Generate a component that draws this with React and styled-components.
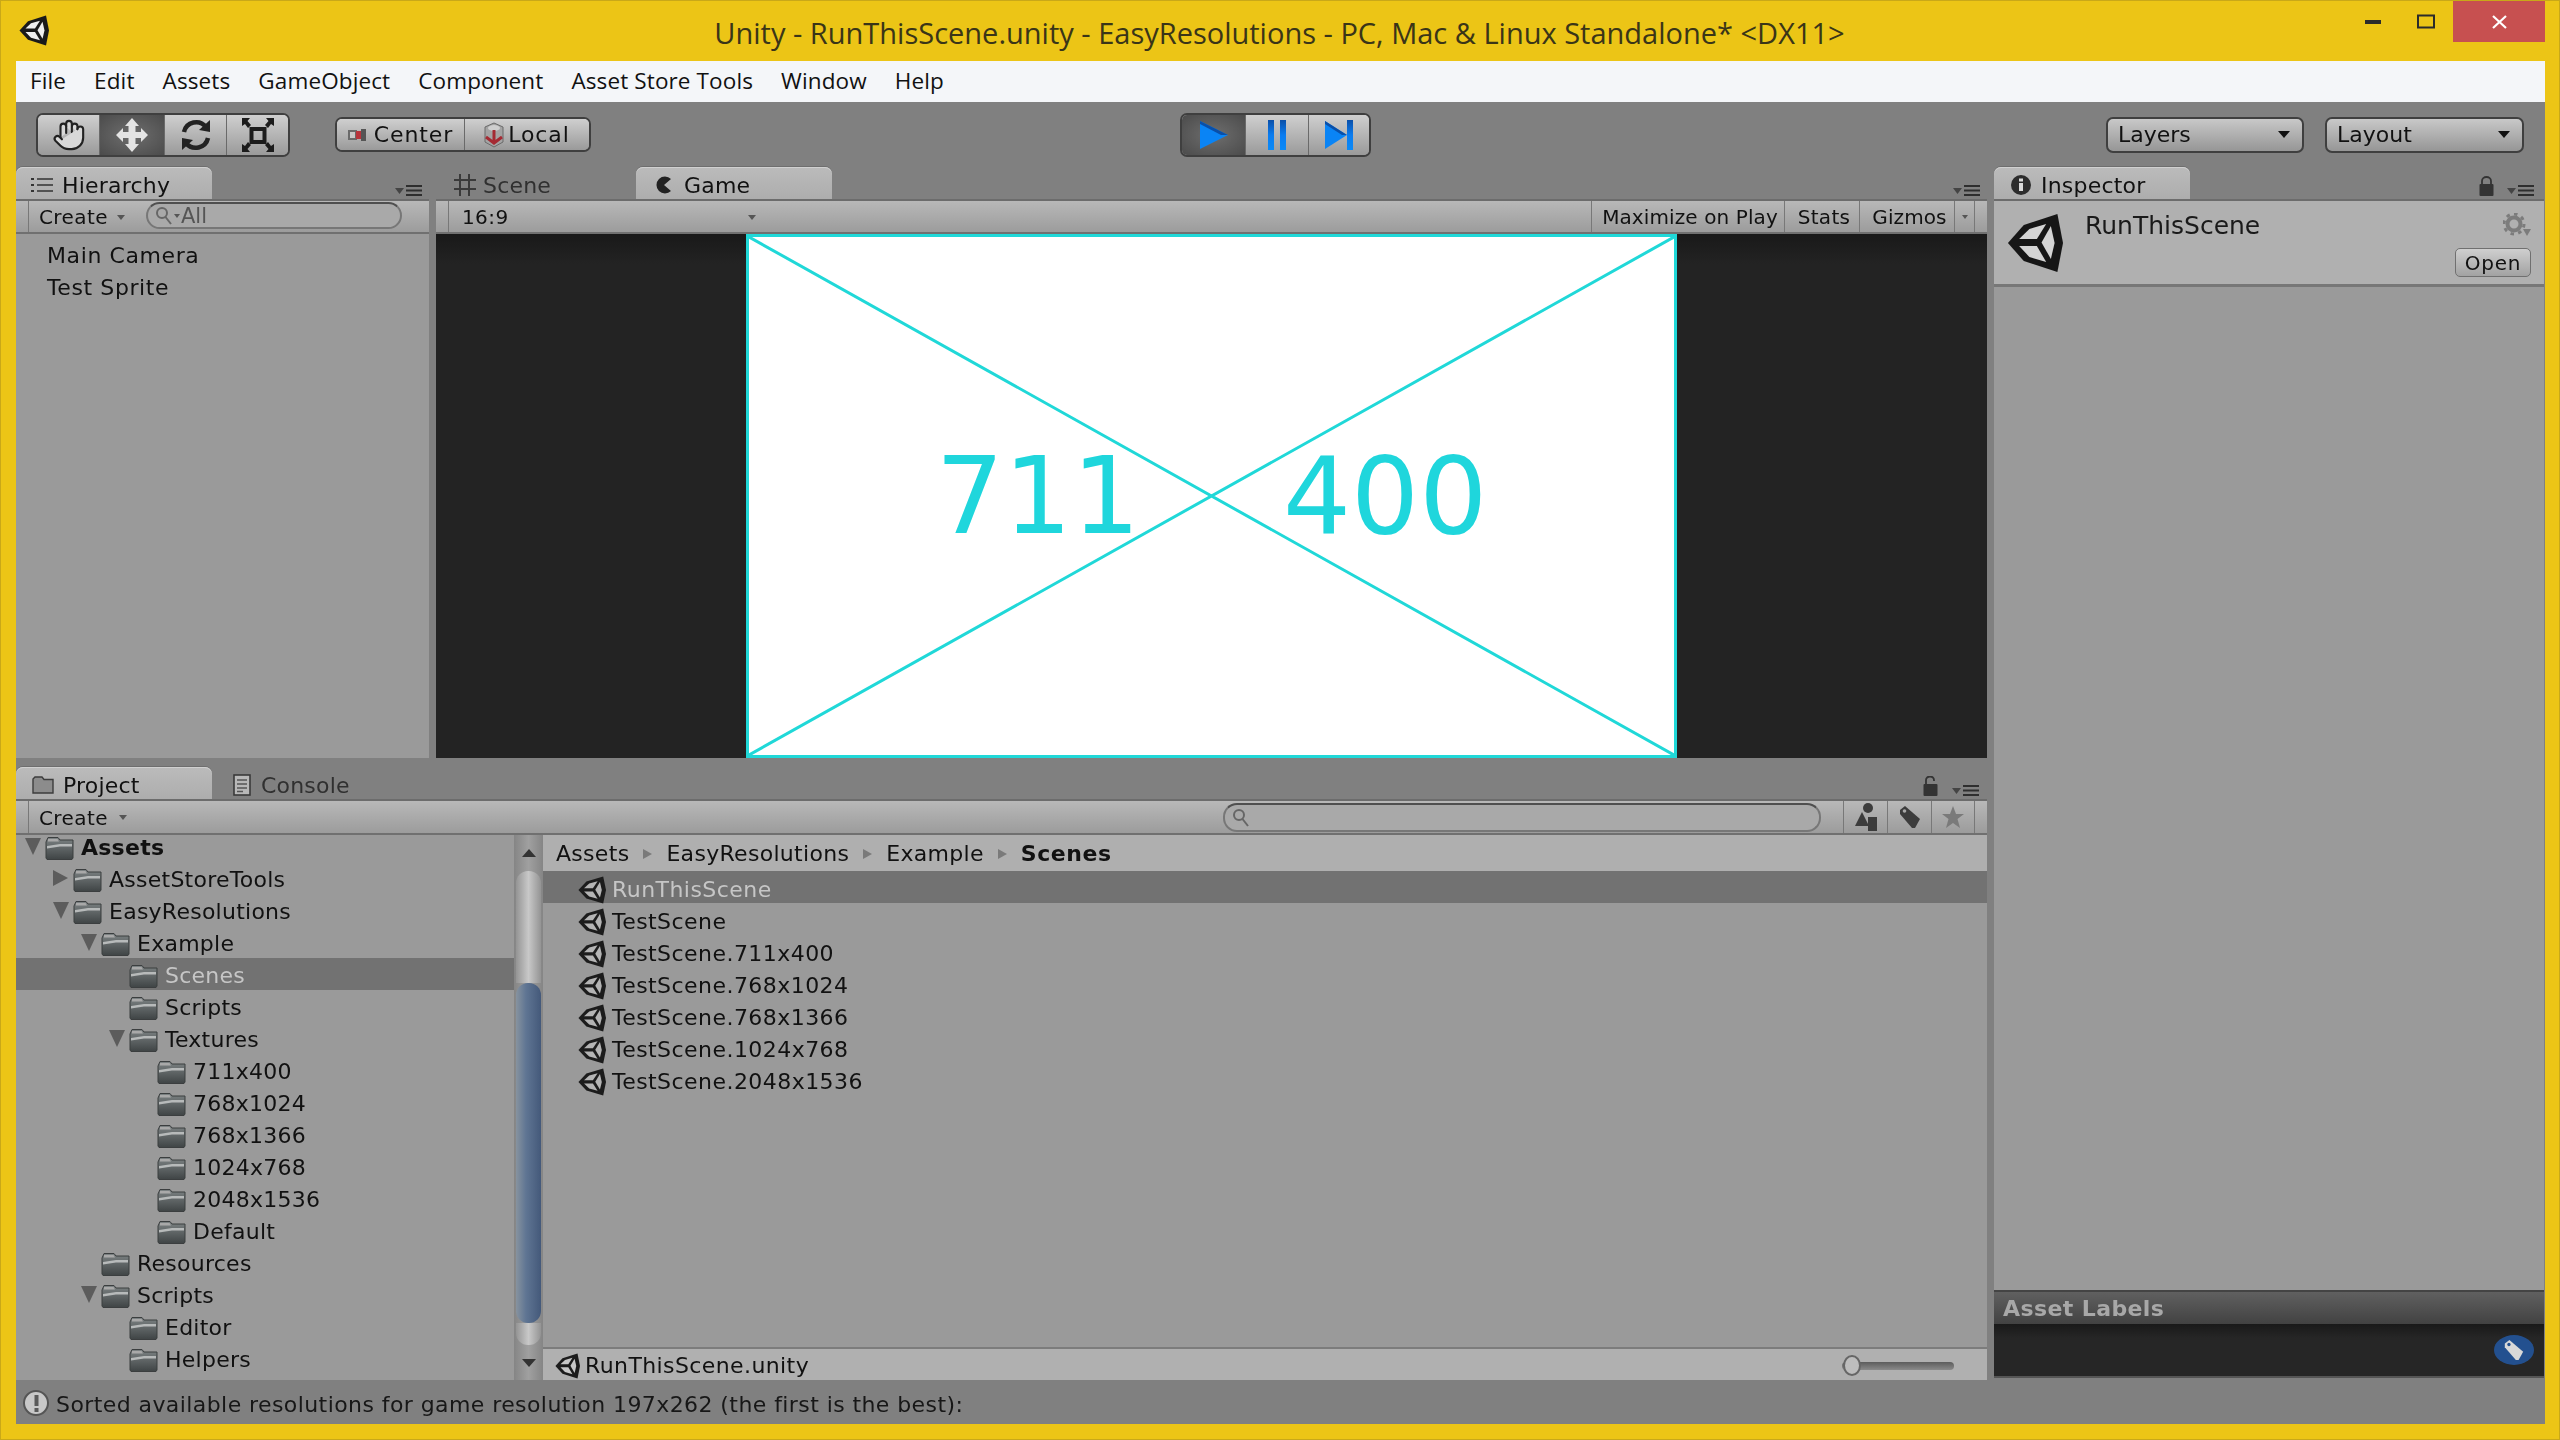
import React from 'react';
import styled, { createGlobalStyle } from 'styled-components';
import { Hand } from 'lucide-react';

const GlobalStyle = createGlobalStyle`
  html, body { margin: 0; padding: 0; background: #ecc516; }
  * { box-sizing: border-box; }
`;

const UI_FONT = '"DejaVu Sans", sans-serif';

const Window = styled.div`
  width: 2560px;
  height: 1440px;
  display: flex;
  flex-direction: column;
  background: #ecc516;
  border: 1px solid #c9a818;
  padding: 0 14px 15px 15px;
  overflow: hidden;
`;

const TitleBar = styled.div`
  height: 60px;
  flex: none;
  display: flex;
  align-items: flex-start;
`;

const LogoSlot = styled.div`
  width: 36px;
  padding: 14px 0 0 3px;
  flex: none;
`;

const TitleText = styled.div`
  flex: 1;
  text-align: center;
  padding: 12px 0 0 172px;
  font: 29px "Open Sans", sans-serif;
  color: #3a3518;
  white-space: nowrap;
`;

const WinControls = styled.div`
  display: flex;
  flex: none;
  align-items: flex-start;
`;

const WinButton = styled.div`
  width: ${p => p.$w}px;
  height: 41px;
  margin-left: ${p => p.$ml || 0}px;
  display: flex;
  align-items: center;
  justify-content: center;
  background: ${p => p.$close ? '#c75050' : 'transparent'};
`;

const MenuBar = styled.div`
  height: 41px;
  flex: none;
  display: flex;
  align-items: center;
  gap: 28px;
  padding: 0 0 2px 14px;
  background: #f4f6f9;
  font: 22.5px "Open Sans", sans-serif;
  letter-spacing: 0.12px;
  color: #111;
`;

const Editor = styled.div`
  flex: 1;
  min-height: 0;
  display: flex;
  flex-direction: column;
  background: #808080;
  filter: blur(0.55px);
  font-family: ${UI_FONT};
`;

const ToolBar = styled.div`
  height: 65px;
  flex: none;
  display: grid;
  grid-template-columns: 1fr auto 1fr;
  align-items: center;
  padding: 0 21px 0 20px;
`;

const ToolSide = styled.div`
  display: flex;
  align-items: center;
  gap: ${p => p.$gap || 0}px;
  justify-content: ${p => p.$end ? 'flex-end' : 'flex-start'};
`;

const BtnGroup = styled.div`
  display: flex;
  height: ${p => p.$h}px;
  margin-right: ${p => p.$mr || 0}px;
  border: 2px solid #3f3f3f;
  border-radius: 7px;
  overflow: hidden;
  background: linear-gradient(#cfcfcf, #9a9a9a);
`;

const ToolBtn = styled.div`
  width: ${p => p.$w}px;
  display: flex;
  align-items: center;
  justify-content: center;
  gap: ${p => p.$gap || 8}px;
  font-size: 22px;
  letter-spacing: 0.9px;
  color: #111;
  background: ${p => p.$on
    ? 'radial-gradient(ellipse at center, #6e6e6e, #4b4b4b)'
    : 'linear-gradient(#cfcfcf, #9a9a9a)'};
  & + & { border-left: 1px solid ${p => p.$dark ? '#2c2c2c' : '#6a6a6a'}; }
`;

const DropButton = styled.div`
  width: ${p => p.$w}px;
  height: 36px;
  display: flex;
  align-items: center;
  justify-content: space-between;
  padding: 0 12px 0 10px;
  border: 2px solid #3f3f3f;
  border-radius: 7px;
  background: linear-gradient(#c8c8c8, #969696);
  font-size: 22px;
  color: #111;
`;

const Caret = styled.span`
  width: 0;
  height: 0;
  flex: none;
  border-left: ${p => p.$s || 5}px solid transparent;
  border-right: ${p => p.$s || 5}px solid transparent;
  border-top: ${p => (p.$s || 5) + 1}px solid ${p => p.$c || '#111'};
  transform: ${p => p.$up ? 'rotate(180deg)' : 'none'};
`;

const Workspace = styled.div`
  flex: 1;
  min-height: 0;
  display: grid;
  grid-template-columns: 1971px 550px;
  grid-template-rows: minmax(0, 1fr) 44px;
  column-gap: 7px;
`;

const LeftStack = styled.div`
  display: flex;
  flex-direction: column;
  min-height: 0;
`;

const UpperRow = styled.div`
  height: 591px;
  flex: none;
  display: grid;
  grid-template-columns: 413px 1551px;
  gap: 7px;
`;

const Pane = styled.div`
  display: flex;
  flex-direction: column;
  min-height: 0;
  min-width: 0;
  margin-top: ${p => p.$top || 0}px;
  flex: ${p => p.$grow ? 1 : 'none'};
`;

const TabStrip = styled.div`
  height: 32px;
  flex: none;
  display: flex;
  align-items: flex-end;
`;

const Tab = styled.div`
  width: ${p => p.$w}px;
  height: 32px;
  display: flex;
  align-items: center;
  gap: ${p => p.$gap || 9}px;
  padding: 4px 0 0 ${p => p.$pad}px;
  border-radius: 7px 7px 0 0;
  font-size: 22px;
  letter-spacing: 0.2px;
  color: ${p => p.$on ? '#111' : '#303030'};
  background: ${p => p.$on ? 'linear-gradient(#bbb, #adadad)' : 'transparent'};
  box-shadow: ${p => p.$on ? 'inset 0 1px 0 #d0d0d0, 0 -1px 0 #6e6e6e' : 'none'};
`;

const TabTools = styled.div`
  margin-left: auto;
  display: flex;
  align-items: flex-end;
  gap: ${p => p.$gap || 0}px;
  padding: 0 ${p => p.$right || 6}px 3px 0;
`;

const PanelBar = styled.div`
  height: ${p => p.$h || 35}px;
  flex: none;
  display: flex;
  align-items: stretch;
  padding: 0 ${p => p.$pr || 0}px 0 12px;
  border-top: 2px solid #6c6c6c;
  border-bottom: 2px solid #707070;
  background: linear-gradient(#b8b8b8, #9c9c9c);
  font-size: 20px;
  color: #111;
`;

const BarCell = styled.div`
  width: ${p => p.$w}px;
  display: flex;
  align-items: center;
  justify-content: ${p => p.$center ? 'center' : 'space-between'};
  padding: 1px ${p => p.$pr ?? 6}px 0 ${p => p.$pl ?? 10}px;
  border-left: 1px solid #787878;
  border-right: ${p => p.$last ? '1px solid #787878' : '0'};
  margin-left: ${p => p.$auto ? 'auto' : 0};
  letter-spacing: ${p => p.$ls || 0}px;
  white-space: nowrap;
`;

const SearchField = styled.div`
  width: ${p => p.$w}px;
  height: ${p => p.$h || 27}px;
  margin: ${p => p.$mt || 1}px 0 0 ${p => p.$ml ? `${p.$ml}px` : 'auto'};
  display: flex;
  align-items: center;
  gap: 1px;
  padding-left: 7px;
  border: 2px solid #777;
  border-top-color: #4f4f4f;
  border-radius: 14px;
  background: #a9a9a9;
  font-size: 21px;
  color: #555;
`;

const PanelBody = styled.div`
  flex: 1;
  min-height: 0;
  background: #9a9a9a;
  overflow: hidden;
  padding: ${p => p.$pad || 0};
`;

const PlainRow = styled.div`
  height: 32px;
  display: flex;
  align-items: center;
  padding-left: 31px;
  font-size: 22px;
  letter-spacing: 0.6px;
  color: #111;
`;

const GameBody = styled.div`
  flex: 1;
  min-height: 0;
  display: flex;
  justify-content: center;
  background: linear-gradient(#191919, #232323 30px);
`;

const GameScreen = styled.div`
  width: 931px;
  height: 100%;
  display: flex;
  position: relative;
  align-items: center;
  justify-content: center;
  gap: 143px;
  background: #fff;
  border: 3px solid #20d8d8;
`;

const CrossLines = styled.svg`
  position: absolute;
  inset: 0;
  width: 100%;
  height: 100%;
`;

const GameLabel = styled.div`
  font: 107px ${UI_FONT};
  color: #1fd6dc;
`;

const ProjectBody = styled.div`
  flex: 1;
  min-height: 0;
  display: flex;
`;

const Tree = styled.div`
  width: 498px;
  flex: none;
  overflow: hidden;
  background: #9a9a9a;
`;

const TreeList = styled.div`
  margin-top: -5px;
`;

const TreeRow = styled.div`
  height: 32px;
  display: flex;
  align-items: center;
  gap: 7px;
  padding: 3px 0 0 ${p => 29 + p.$level * 28}px;
  font-size: 22px;
  letter-spacing: 0.25px;
  font-weight: ${p => p.$bold ? 700 : 400};
  color: ${p => p.$sel ? '#c6c6c6' : '#111'};
  background: ${p => p.$sel ? '#727272' : 'transparent'};
  position: relative;
`;

const Arrow = styled.span`
  position: absolute;
  left: ${p => 9 + p.$level * 28}px;
  top: 8px;
  width: 0;
  height: 0;
  ${p => p.$open
    ? 'border-left: 8px solid transparent; border-right: 8px solid transparent; border-top: 17px solid #5c5c5c;'
    : 'border-top: 8px solid transparent; border-bottom: 8px solid transparent; border-left: 15px solid #5c5c5c;'}
`;

const ScrollBar = styled.div`
  width: 29px;
  flex: none;
  display: flex;
  flex-direction: column;
  align-items: center;
  padding: 0 2px;
  background: linear-gradient(90deg, #858585, #a0a0a0 50%, #858585);
`;

const ScrollArrow = styled.div`
  height: ${p => p.$h}px;
  flex: none;
  display: flex;
  align-items: center;
  justify-content: center;
`;

const ThumbPart = styled.div`
  width: 100%;
  height: ${p => p.$h}px;
  flex: none;
  border-radius: ${p => p.$radius};
  background: ${p => p.$blue
    ? 'linear-gradient(90deg, #87939f, #5f7593 40%, #44597a)'
    : 'linear-gradient(90deg, #949494, #c8c8c8 50%, #949494)'};
`;

const FileSide = styled.div`
  flex: 1;
  min-width: 0;
  display: flex;
  flex-direction: column;
  background: #9a9a9a;
`;

const Breadcrumb = styled.div`
  height: 36px;
  flex: none;
  display: flex;
  align-items: center;
  gap: 14px;
  padding: 1px 0 0 13px;
  background: #afafaf;
  font-size: 22px;
  letter-spacing: 0.3px;
  color: #111;
`;

const Crumb = styled.span`
  font-weight: ${p => p.$bold ? 700 : 400};
  letter-spacing: ${p => p.$bold ? 0.6 : 0.3}px;
`;

const CrumbArrow = styled.span`
  width: 0;
  height: 0;
  border-top: 5px solid transparent;
  border-bottom: 5px solid transparent;
  border-left: 9px solid #7a7a7a;
`;

const FileList = styled.div`
  flex: 1;
  min-height: 0;
`;

const FileRow = styled.div`
  height: 32px;
  display: flex;
  align-items: center;
  gap: 6px;
  padding: 5px 0 0 35px;
  font-size: 22px;
  letter-spacing: 0.45px;
  color: ${p => p.$sel ? '#c6c6c6' : '#111'};
  background: ${p => p.$sel ? '#727272' : 'transparent'};
`;

const PathBar = styled.div`
  height: 33px;
  flex: none;
  display: flex;
  align-items: center;
  gap: 5px;
  padding: 2px 33px 0 12px;
  border-top: 2px solid #7c7c7c;
  background: #b0b0b0;
  font-size: 22px;
  letter-spacing: 0.4px;
  color: #111;
`;

const Slider = styled.div`
  margin-left: auto;
  width: 112px;
  height: 8px;
  position: relative;
  border-radius: 4px;
  background: linear-gradient(#5c5c5c, #8a8a8a);
`;

const SliderKnob = styled.div`
  position: absolute;
  left: 1px;
  top: -7px;
  width: 18px;
  height: 21px;
  border-radius: 50%;
  border: 2px solid #666;
  background: #bdbdbd;
`;

const IconCell = styled.div`
  width: 44px;
  margin-left: ${p => p.$ml || 0}px;
  display: flex;
  align-items: center;
  justify-content: center;
  border-left: 1px solid #787878;
  border-right: ${p => p.$last ? '1px solid #787878' : '0'};
`;

const InspectorHead = styled.div`
  height: 88px;
  flex: none;
  display: flex;
  padding: 12px 13px 0 13px;
  border-top: 2px solid #6c6c6c;
  border-bottom: 3px solid #777;
  background: #b0b0b0;
`;

const InspectorName = styled.div`
  flex: 1;
  padding: 0 0 0 22px;
  font-size: 25px;
  line-height: 26px;
  color: #1a1a1a;
`;

const InspectorSide = styled.div`
  display: flex;
  flex-direction: column;
  align-items: flex-end;
  gap: 11px;
`;

const SmallButton = styled.div`
  width: 76px;
  height: 29px;
  display: flex;
  align-items: center;
  justify-content: center;
  border: 1px solid #707070;
  border-radius: 5px;
  background: linear-gradient(#cfcfcf, #a2a2a2);
  font-size: 20px;
  letter-spacing: 0.8px;
  color: #111;
`;

const LabelsHead = styled.div`
  height: 34px;
  flex: none;
  display: flex;
  align-items: center;
  padding-left: 9px;
  border-top: 2px solid #444;
  background: linear-gradient(#606060, #424242);
  font-size: 22px;
  font-weight: 700;
  letter-spacing: 0.4px;
  color: #a8a8a8;
`;

const LabelsBody = styled.div`
  height: 54px;
  flex: none;
  margin-bottom: 2px;
  display: flex;
  justify-content: flex-end;
  align-items: center;
  padding-right: 10px;
  background: linear-gradient(#191919, #262626 14px);
  border-bottom: 2px solid #555;
`;

const LabelBadge = styled.div`
  width: 40px;
  height: 30px;
  display: flex;
  align-items: center;
  justify-content: center;
  border-radius: 50%;
  background: #23508f;
`;

const StatusBar = styled.div`
  height: 44px;
  display: flex;
  align-items: center;
  gap: 4px;
  padding: 4px 0 0 6px;
  font-size: 22px;
  letter-spacing: 0.42px;
  color: #171717;
`;

const BottomRow = styled.div`
  grid-column: 1 / 3;
`;

const UnityIcon = ({ size = 28, w, dark = '#141414', light = '#d6d6d6' }) => (
  <svg width={w || size} height={size} viewBox="0 0 30 30" preserveAspectRatio="none" style={{ flex: 'none' }}>
    <polygon points="0.5,15 9,6 27,0.5 30,15 27,29.5 9,24" fill={dark} />
    <polygon points="6.5,13 12,8 21,5.5 16,13" fill={light} />
    <polygon points="6.5,16.5 16,16.5 21,24.5 12,22" fill={light} />
    <polygon points="18.5,14.7 23.5,6.5 25.5,15 23.5,23" fill={light} />
  </svg>
);

const FolderIcon = () => (
  <svg width="29" height="24" viewBox="0 0 29 24" style={{ flex: 'none' }}>
    <defs>
      <linearGradient id="fld" x1="0" y1="0" x2="0" y2="1">
        <stop offset="0" stopColor="#7d8384" />
        <stop offset="1" stopColor="#3f4445" />
      </linearGradient>
    </defs>
    <path d="M1 6 L3 1.5 H13 L15 4 H28 V22 L27 23.5 H2 L1 22 Z" fill="url(#fld)" stroke="#3b3e3f" strokeWidth="1" />
    <path d="M3 3 H12.5 L14 5.5 H3 Z" fill="#a9a9a9" />
    <path d="M2 10 L15 8 H27 V10.5 H15 L2 12.5 Z" fill="#b7baba" />
  </svg>
);

const MenuLines = () => (
  <svg width="28" height="11" viewBox="0 0 28 11">
    <polygon points="0,3 9,3 4.5,9" fill="#444" />
    <path d="M11 1 H27 M11 5.5 H27 M11 10 H27" stroke="#2e2e2e" strokeWidth="2" />
  </svg>
);

const LockIcon = ({ open }) => (
  <svg width="15" height="20" viewBox="0 0 15 20">
    <path d={open ? 'M3 9 V4 a4 3.5 0 0 1 8 0 V5' : 'M3 9 V5 a4.5 4 0 0 1 9 0 V9'} fill="none" stroke="#333" strokeWidth="1.8" />
    <rect x="0.5" y="8" width="14" height="12" rx="1" fill="#333" />
  </svg>
);

const MoveIcon = () => (
  <svg width="34" height="36" viewBox="0 0 34 36">
    <path d="M17 1 L24 9 H20.5 V15 H26 V11 L33 18 L26 25 V21 H20.5 V27 H24 L17 35 L10 27 H13.5 V21 H8 V25 L1 18 L8 11 V15 H13.5 V9 H10 Z" fill="#e4e4e4" />
  </svg>
);

const RotateIcon = () => (
  <svg width="32" height="34" viewBox="0 0 32 34">
    <path d="M4 14 A12.5 12.5 0 0 1 26 9" fill="none" stroke="#222" strokeWidth="4.5" />
    <path d="M28 20 A12.5 12.5 0 0 1 6 25" fill="none" stroke="#222" strokeWidth="4.5" />
    <polygon points="30,2 30,14 19,12" fill="#222" />
    <polygon points="2,32 2,20 13,22" fill="#222" />
  </svg>
);

const ScaleIcon = () => (
  <svg width="36" height="38" viewBox="0 0 36 38">
    <rect x="11.5" y="13" width="13" height="13" fill="none" stroke="#1c1c1c" strokeWidth="4" />
    <path d="M2 2 H10 L7.5 5 L11 9 L8 12 L5 8 L2 10 Z M34 2 H26 L28.5 5 L25 9 L28 12 L31 8 L34 10 Z M2 36 H10 L7.5 33 L11 29 L8 26 L5 30 L2 28 Z M34 36 H26 L28.5 33 L25 29 L28 26 L31 30 L34 28 Z" fill="#1c1c1c" />
  </svg>
);

const PlayIcon = () => (
  <svg width="30" height="30" viewBox="0 0 30 30">
    <polygon points="1,1 29,15 1,29" fill="#0a84f5" />
    <polygon points="1,1 29,15 22,15 1,4" fill="#0a4fa8" />
  </svg>
);

const PauseIcon = () => (
  <svg width="20" height="30" viewBox="0 0 20 30">
    <defs>
      <linearGradient id="pse" x1="0" y1="0" x2="0" y2="1">
        <stop offset="0" stopColor="#0a4fa8" />
        <stop offset="0.5" stopColor="#0a7cf0" />
        <stop offset="1" stopColor="#0a8af8" />
      </linearGradient>
    </defs>
    <rect x="1" width="6" height="30" fill="url(#pse)" />
    <rect x="13" width="6" height="30" fill="url(#pse)" />
  </svg>
);

const StepIcon = () => (
  <svg width="30" height="30" viewBox="0 0 30 30">
    <polygon points="1,1 23,15 1,29" fill="#0a84f5" />
    <polygon points="1,1 23,15 18,15 1,4" fill="#0a4fa8" />
    <rect x="23" width="6" height="30" fill="url(#pse)" />
  </svg>
);

const PivotIcon = () => (
  <svg width="18" height="14" viewBox="0 0 18 14">
    <rect x="0" y="2" width="9" height="10" fill="#6a6a6a" />
    <rect x="2" y="4" width="5" height="6" fill="#c8c8c8" />
    <rect x="8" y="3" width="5" height="8" fill="#b8343c" />
    <rect x="13" y="1" width="5" height="12" fill="#555" />
  </svg>
);

const LocalIcon = () => (
  <svg width="20" height="26" viewBox="0 0 20 26">
    <path d="M10 1 L19 5 V20 L10 25 L1 20 V5 Z" fill="#a4a4a4" stroke="#6a6a6a" />
    <ellipse cx="10" cy="6" rx="6" ry="3" fill="#cfcfcf" />
    <path d="M10 8 V20 M2 15 L10 21 L18 15" fill="none" stroke="#a52a33" strokeWidth="3" />
  </svg>
);

const ListIcon = () => (
  <svg width="22" height="16" viewBox="0 0 22 16">
    <path d="M6 2 H22 M6 8 H22 M6 14 H22" stroke="#333" strokeWidth="1.6" />
    <path d="M0 2 H3 M0 8 H3 M0 14 H3" stroke="#333" strokeWidth="2.2" />
  </svg>
);

const GridIcon = () => (
  <svg width="24" height="24" viewBox="0 0 24 24">
    <path d="M7 1 V23 M16 1 V23 M1 7 H23 M1 16 H23" stroke="#3a3a3a" strokeWidth="2" />
  </svg>
);

const PacIcon = () => (
  <svg width="18" height="18" viewBox="0 0 18 18">
    <path d="M17 3 A8.5 8.5 0 1 0 17 15 L10 9 Z" fill="#222" />
  </svg>
);

const InfoIcon = () => (
  <svg width="20" height="20" viewBox="0 0 20 20">
    <circle cx="10" cy="10" r="10" fill="#2c2c2c" />
    <rect x="8" y="8" width="4" height="8" fill="#d8d8d8" />
    <rect x="8" y="3.5" width="4" height="3" fill="#d8d8d8" />
  </svg>
);

const FolderTabIcon = () => (
  <svg width="22" height="18" viewBox="0 0 22 18">
    <path d="M1 17 V3 L3 1 H10 L12 3.5 H21 V17 Z" fill="#8c8c8c" stroke="#3c3c3c" strokeWidth="1.4" />
  </svg>
);

const ConsoleIcon = () => (
  <svg width="18" height="22" viewBox="0 0 18 22">
    <rect x="1" y="1" width="16" height="20" fill="#b8b8b8" stroke="#3a3a3a" strokeWidth="1.6" />
    <path d="M4 6 H14 M4 10 H14 M4 14 H14 M4 17.5 H10" stroke="#555" strokeWidth="1.4" />
  </svg>
);

const SearchGlass = () => (
  <svg width="18" height="20" viewBox="0 0 18 20">
    <circle cx="7" cy="7" r="5" fill="none" stroke="#666" strokeWidth="2" />
    <path d="M10.5 11 L16 18" stroke="#666" strokeWidth="2" />
  </svg>
);

const ShapesIcon = () => (
  <svg width="24" height="30" viewBox="0 0 24 30">
    <circle cx="14" cy="6" r="5" fill="#3c3c3c" />
    <polygon points="8,10 15,24 1,24" fill="#3c3c3c" />
    <rect x="14" y="15" width="9" height="14" fill="#3c3c3c" />
  </svg>
);

const TagIcon = ({ fill = '#3c3c3c', hole = '#a8a8a8', size = 24 }) => (
  <svg width={size} height={size} viewBox="0 0 24 24">
    <path d="M2 5 L7 1 L22 14 L17 23 L14 23 L2 9 Z" fill={fill} />
    <circle cx="6.5" cy="6" r="1.8" fill={hole} />
  </svg>
);

const StarIcon = () => (
  <svg width="24" height="24" viewBox="0 0 24 24">
    <polygon points="12,1 15,9 23,9 16.5,14 19,23 12,18 5,23 7.5,14 1,9 9,9" fill="#7a7a7a" />
  </svg>
);

const GearIcon = () => (
  <svg width="28" height="24" viewBox="0 0 28 24">
    <circle cx="11" cy="11" r="6.5" fill="none" stroke="#7c7c7c" strokeWidth="4" />
    <circle cx="11" cy="11" r="10" fill="none" stroke="#7c7c7c" strokeWidth="3" strokeDasharray="3.5 4.3" />
    <polygon points="20,16 28,16 24,23" fill="#7c7c7c" />
  </svg>
);

const WarnIcon = () => (
  <svg width="30" height="30" viewBox="0 0 30 30" style={{ flex: 'none' }}>
    <circle cx="14" cy="14" r="12" fill="#c8c8c8" stroke="#555" strokeWidth="2" />
    <rect x="12.5" y="6" width="4" height="11" fill="#5a5a5a" />
    <rect x="12.5" y="19" width="4" height="4" fill="#5a5a5a" />
  </svg>
);

const treeRows = [
  { name: 'Assets', level: 0, open: true, bold: true },
  { name: 'AssetStoreTools', level: 1, closed: true },
  { name: 'EasyResolutions', level: 1, open: true },
  { name: 'Example', level: 2, open: true },
  { name: 'Scenes', level: 3, sel: true },
  { name: 'Scripts', level: 3 },
  { name: 'Textures', level: 3, open: true },
  { name: '711x400', level: 4 },
  { name: '768x1024', level: 4 },
  { name: '768x1366', level: 4 },
  { name: '1024x768', level: 4 },
  { name: '2048x1536', level: 4 },
  { name: 'Default', level: 4 },
  { name: 'Resources', level: 2 },
  { name: 'Scripts', level: 2, open: true },
  { name: 'Editor', level: 3 },
  { name: 'Helpers', level: 3 },
  { name: '', level: 3 },
];

const sceneFiles = ['RunThisScene', 'TestScene', 'TestScene.711x400', 'TestScene.768x1024', 'TestScene.768x1366', 'TestScene.1024x768', 'TestScene.2048x1536'];
const menus = ['File', 'Edit', 'Assets', 'GameObject', 'Component', 'Asset Store Tools', 'Window', 'Help'];

const App = () => {
  return (
    <Window>
      <GlobalStyle />
      <TitleBar>
        <LogoSlot><UnityIcon size={31} w={30} dark="#1a1a1a" light="#f0f0f0" /></LogoSlot>
        <TitleText>Unity - RunThisScene.unity - EasyResolutions - PC, Mac &amp; Linux Standalone* &lt;DX11&gt;</TitleText>
        <WinControls>
          <WinButton $w={76}>
            <svg width="16" height="4"><rect width="16" height="4" fill="#2b2b2b" /></svg>
          </WinButton>
          <WinButton $w={30}>
            <svg width="18" height="15"><rect x="1" y="1.5" width="16" height="12" fill="none" stroke="#2b2b2b" strokeWidth="2" /></svg>
          </WinButton>
          <WinButton $w={92} $close $ml={12}>
            <svg width="15" height="14"><path d="M1 1 L14 13 M14 1 L1 13" stroke="#fff" strokeWidth="2.2" /></svg>
          </WinButton>
        </WinControls>
      </TitleBar>
      <MenuBar>
        {menus.map(m => <span key={m}>{m}</span>)}
      </MenuBar>
      <Editor>
        <ToolBar>
          <ToolSide $gap={45}>
            <BtnGroup $h={44}>
              <ToolBtn $w={61}><Hand size={34} color="#222" strokeWidth={1.5} fill="#d8d8d8" /></ToolBtn>
              <ToolBtn $w={65} $on><MoveIcon /></ToolBtn>
              <ToolBtn $w={62}><RotateIcon /></ToolBtn>
              <ToolBtn $w={62}><ScaleIcon /></ToolBtn>
            </BtnGroup>
            <BtnGroup $h={35}>
              <ToolBtn $w={127} $dark><PivotIcon />Center</ToolBtn>
              <ToolBtn $w={125} $dark $gap={4}><LocalIcon />Local</ToolBtn>
            </BtnGroup>
          </ToolSide>
          <BtnGroup $h={44} $mr={9}>
            <ToolBtn $w={63} $on><PlayIcon /></ToolBtn>
            <ToolBtn $w={63}><PauseIcon /></ToolBtn>
            <ToolBtn $w={61}><StepIcon /></ToolBtn>
          </BtnGroup>
          <ToolSide $end $gap={21}>
            <DropButton $w={198}>Layers<Caret $s={6} /></DropButton>
            <DropButton $w={199}>Layout<Caret $s={6} /></DropButton>
          </ToolSide>
        </ToolBar>

        <Workspace>
          <LeftStack>
            <UpperRow>
              <Pane>
                <TabStrip>
                  <Tab $on $w={196} $pad={15}><ListIcon />Hierarchy</Tab>
                  <TabTools><MenuLines /></TabTools>
                </TabStrip>
                <PanelBar>
                  <BarCell $w={103} $ls={0.4}>Create<Caret $s={4} $c="#555" /></BarCell>
                  <SearchField $w={256} $ml={15}><SearchGlass /><Caret $s={3} $c="#555" />All</SearchField>
                </PanelBar>
                <PanelBody $pad="5px 0 0 0">
                  <PlainRow>Main Camera</PlainRow>
                  <PlainRow>Test Sprite</PlainRow>
                </PanelBody>
              </Pane>
              <Pane>
                <TabStrip>
                  <Tab $w={200} $pad={17} $gap={6}><GridIcon />Scene</Tab>
                  <Tab $on $w={196} $pad={18} $gap={12}><PacIcon />Game</Tab>
                  <TabTools><MenuLines /></TabTools>
                </TabStrip>
                <PanelBar $pr={12}>
                  <BarCell $w={320} $pl={13} $pr={12} $ls={0.4}>16:9<Caret $s={4} $c="#555" /></BarCell>
                  <BarCell $w={193} $auto $center $pl={4} $pr={0} $ls={0.1}>Maximize on Play</BarCell>
                  <BarCell $w={75} $center $pl={4} $pr={0} $ls={0.3}>Stats</BarCell>
                  <BarCell $w={95} $center $pl={5} $pr={0} $ls={0.1}>Gizmos</BarCell>
                  <BarCell $w={21} $center $pl={0} $pr={0} $last><Caret $s={3} $c="#555" /></BarCell>
                </PanelBar>
                <GameBody>
                  <GameScreen>
                    <CrossLines viewBox="0 0 925 516" preserveAspectRatio="none">
                      <path d="M0 0 L925 516 M925 0 L0 516" stroke="#20d8d8" strokeWidth="3" />
                    </CrossLines>
                    <GameLabel>711</GameLabel>
                    <GameLabel>400</GameLabel>
                  </GameScreen>
                </GameBody>
              </Pane>
            </UpperRow>

            <Pane $top={9} $grow>
              <TabStrip>
                <Tab $on $w={196} $pad={16}><FolderTabIcon />Project</Tab>
                <Tab $w={200} $pad={21} $gap={10}><ConsoleIcon />Console</Tab>
                <TabTools $gap={14} $right={7}><LockIcon open /><MenuLines /></TabTools>
              </TabStrip>
              <PanelBar $h={36} $pr={12}>
                <BarCell $w={105} $ls={0.4}>Create<Caret $s={4} $c="#555" /></BarCell>
                <SearchField $w={598} $h={29} $mt={2}><SearchGlass /></SearchField>
                <IconCell $ml={22}><ShapesIcon /></IconCell>
                <IconCell><TagIcon /></IconCell>
                <IconCell $last><StarIcon /></IconCell>
              </PanelBar>
              <ProjectBody>
                <Tree>
                  <TreeList>
                    {treeRows.map((row, i) => (
                      <TreeRow key={i} $level={row.level} $sel={row.sel} $bold={row.bold}>
                        {row.open && <Arrow $open $level={row.level} />}
                        {row.closed && <Arrow $level={row.level} />}
                        <FolderIcon />{row.name}
                      </TreeRow>
                    ))}
                  </TreeList>
                </Tree>
                <ScrollBar>
                  <ScrollArrow $h={36}><Caret $s={7} $c="#333" $up /></ScrollArrow>
                  <ThumbPart $h={112} $radius="12px 12px 0 0" />
                  <ThumbPart $h={340} $blue $radius="12px" />
                  <ThumbPart $h={22} $radius="0 0 12px 12px" />
                  <ScrollArrow $h={35}><Caret $s={7} $c="#333" /></ScrollArrow>
                </ScrollBar>
                <FileSide>
                  <Breadcrumb>
                    <Crumb>Assets</Crumb><CrumbArrow />
                    <Crumb>EasyResolutions</Crumb><CrumbArrow />
                    <Crumb>Example</Crumb><CrumbArrow />
                    <Crumb $bold>Scenes</Crumb>
                  </Breadcrumb>
                  <FileList>
                    {sceneFiles.map((f, i) => (
                      <FileRow key={f} $sel={i === 0}><UnityIcon size={28} w={28} dark="#1c1c1c" light="#b4b4b4" />{f}</FileRow>
                    ))}
                  </FileList>
                  <PathBar>
                    <UnityIcon size={26} w={25} dark="#1c1c1c" light="#c8c8c8" />RunThisScene.unity
                    <Slider><SliderKnob /></Slider>
                  </PathBar>
                </FileSide>
              </ProjectBody>
            </Pane>
          </LeftStack>

          <Pane>
            <TabStrip>
              <Tab $on $w={196} $pad={17} $gap={10}><InfoIcon />Inspector</Tab>
              <TabTools $gap={13} $right={9}><LockIcon /><MenuLines /></TabTools>
            </TabStrip>
            <InspectorHead>
              <UnityIcon size={60} w={56} dark="#161616" light="#d4d4d4" />
              <InspectorName>RunThisScene</InspectorName>
              <InspectorSide>
                <GearIcon />
                <SmallButton>Open</SmallButton>
              </InspectorSide>
            </InspectorHead>
            <PanelBody />
            <LabelsHead>Asset Labels</LabelsHead>
            <LabelsBody>
              <LabelBadge><TagIcon fill="#d8d8d8" hole="#23508f" size={22} /></LabelBadge>
            </LabelsBody>
          </Pane>

          <BottomRow>
            <StatusBar><WarnIcon />Sorted available resolutions for game resolution 197x262 (the first is the best):</StatusBar>
          </BottomRow>
        </Workspace>
      </Editor>
    </Window>
  );
};

export default App;
